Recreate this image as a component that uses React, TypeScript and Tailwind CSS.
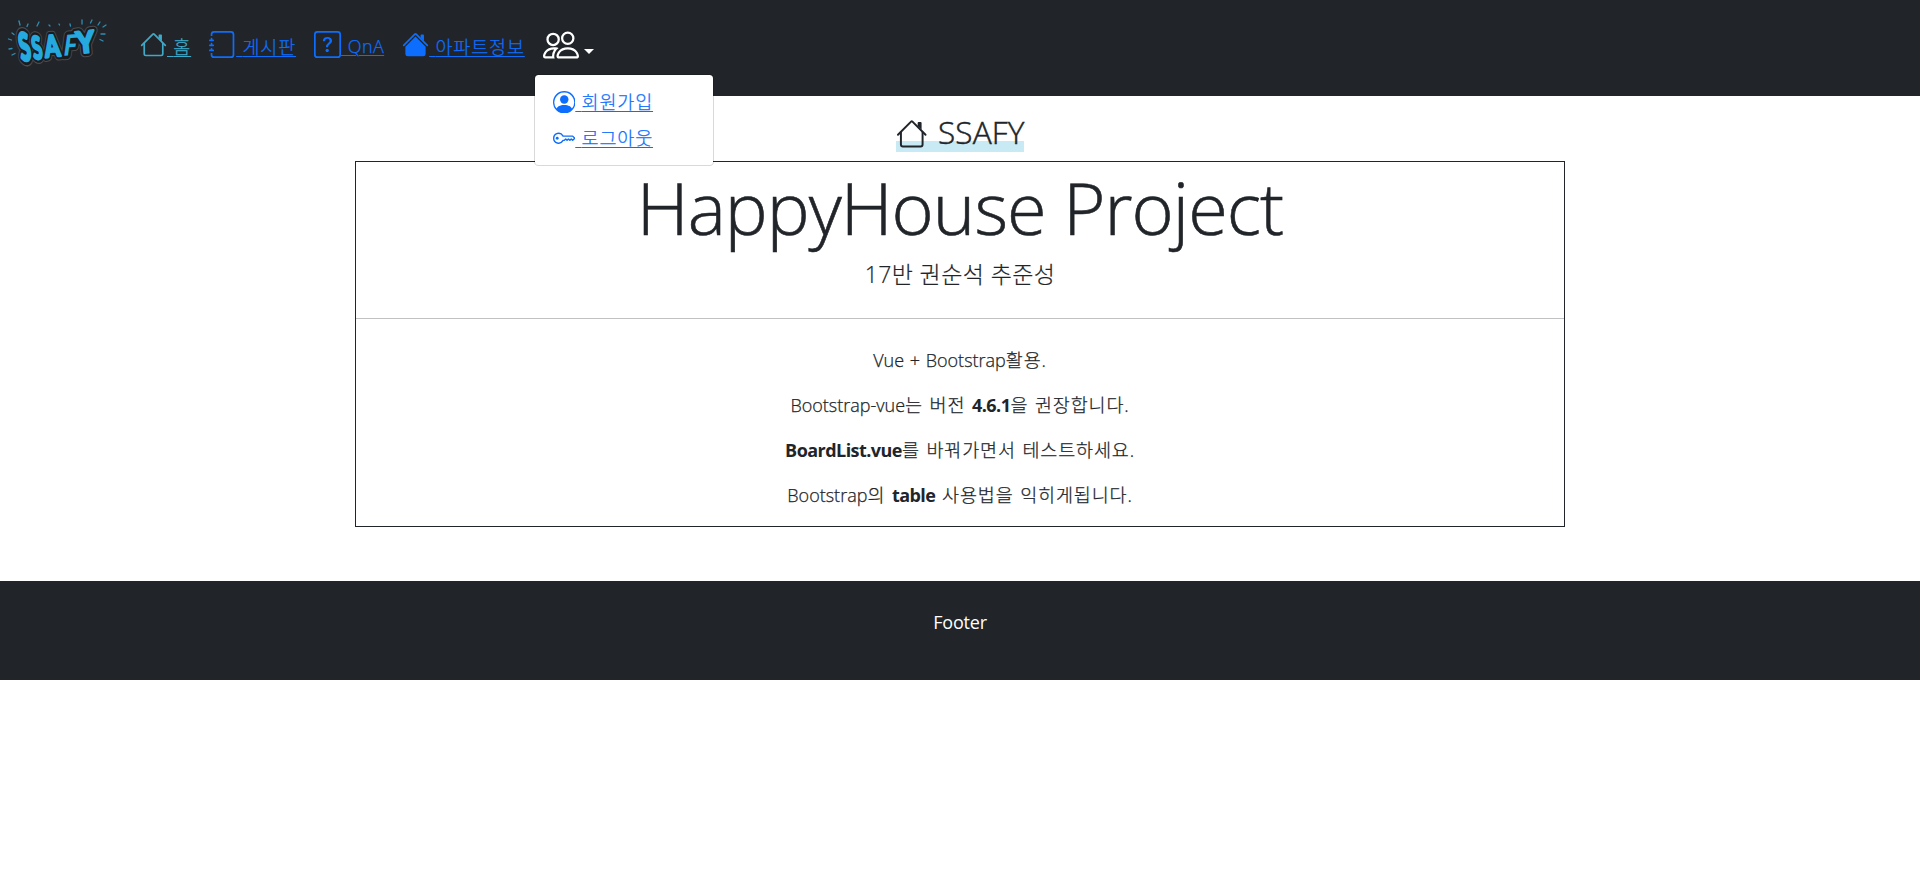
import type { ReactNode } from "react";
import { BsJournal, BsKey, BsPeople, BsPersonCircle, BsQuestionSquare } from "react-icons/bs";

const ROOF =
  "M7.293 1.5a1 1 0 0 1 1.414 0l6.647 6.646a.5.5 0 0 1-.708.708L8 2.207 1.354 8.854a.5.5 0 1 1-.708-.708L7.293 1.5z";

function House({ className }: { className: string }) {
  return (
    <svg viewBox="0 0 16 16" fill="currentColor" className={className}>
      <path
        fillRule="evenodd"
        d="M2 13.5V7h1v6.5a.5.5 0 0 0 .5.5h9a.5.5 0 0 0 .5-.5V7h1v6.5a1.5 1.5 0 0 1-1.5 1.5h-9A1.5 1.5 0 0 1 2 13.5zm11-11V6l-2-2V2.5a.5.5 0 0 1 .5-.5h1a.5.5 0 0 1 .5.5z"
      />
      <path fillRule="evenodd" d={ROOF} />
    </svg>
  );
}

function HouseFill({ className }: { className: string }) {
  return (
    <svg viewBox="0 0 16 16" fill="currentColor" className={className}>
      <path
        fillRule="evenodd"
        d="m8 3.293 6 6V13.5a1.5 1.5 0 0 1-1.5 1.5h-9A1.5 1.5 0 0 1 2 13.5V9.293l6-6zm5-.793V6l-2-2V2.5a.5.5 0 0 1 .5-.5h1a.5.5 0 0 1 .5.5z"
      />
      <path fillRule="evenodd" d={ROOF} />
    </svg>
  );
}

const letters = [
  { c: "S", t: "translate(17.5 51) rotate(-6) skewX(4) scale(0.9 1.75)" },
  { c: "S", t: "translate(30 49.5) rotate(-6) skewX(4) scale(0.8 1.45)" },
  { c: "A", t: "translate(41.5 47.5) rotate(-6) scale(1 1.35)" },
  { c: "F", t: "translate(58.5 46) rotate(-4) skewX(-12) scale(1.1 1.3)" },
  { c: "Y", t: "translate(73.5 43.5) rotate(-6) scale(1.25 1.35)" },
];

const rays = [
  "M8 23l2 1.5", "M4.500 29l3 1", "M5 39l3-.5", "M8 45l3-1.500", "M15 11l1 4", "M24 14l-1 2.500",
  "M35 12l-2 4", "M45 15l1 1", "M55 14l.5 1", "M66 14l.5 2", "M78 10v4", "M88 10l-1.500 3",
  "M96 12l-2 3", "M102 15l-3 2", "M101 24l-4 0", "M99 31l-3-1.500",
];

function Logo() {
  return (
    <svg viewBox="0 0 110 60" className="h-[60px] w-[110px] shrink-0">
      <g fontFamily="Lato, sans-serif" fontWeight="900" fontSize="22" strokeLinejoin="round">
        {letters.map((l, i) => (
          <text key={i} transform={l.t} fill="#4b4b4e" stroke="#4b4b4e" strokeWidth="6.500">{l.c}</text>
        ))}
        {letters.map((l, i) => (
          <text key={i} transform={l.t} fill="#1b1c1f" stroke="#1b1c1f" strokeWidth="5">{l.c}</text>
        ))}
        {letters.map((l, i) => (
          <text key={i} transform={l.t} fill="#25a9df" stroke="#25a9df" strokeWidth={l.c === "F" ? 0 : 1.7}>{l.c}</text>
        ))}
      </g>
      <g stroke="#2f8db5" strokeWidth="1.300" strokeLinecap="round" fill="none">
        {rays.map((d) => <path key={d} d={d} />)}
      </g>
    </svg>
  );
}

const Ko = ({ children }: { children: ReactNode }) => (
  <span className="text-[18.500px] tracking-[0.85px]">{children}</span>
);

const Label = ({ children }: { children: ReactNode }) => (
  <span className="whitespace-pre underline decoration-1 underline-offset-[2px] [word-spacing:1.6px]">{children}</span>
);

const Row = ({ children }: { children: ReactNode }) => (
  <p className="mb-[18px] h-[27px] whitespace-pre [word-spacing:1px]">{children}</p>
);

const Strong = ({ children }: { children: ReactNode }) => (
  <strong className="font-bold tracking-[-0.55px] [-webkit-text-stroke:0]">{children}</strong>
);

export default function App() {
  return (
    <div className="min-h-[885px] bg-white font-['Open_Sans','Noto_Sans_CJK_KR',sans-serif] text-[18px] font-light leading-[27px] text-[#212529]">
      <header className="flex h-24 items-start bg-[#212529] pl-1 text-[#0d6efd]">
        <div className="pt-[10px]"><Logo /></div>
        <nav className="ml-[26px] flex items-start gap-[18px] pt-[31px] [-webkit-text-stroke:0.25px]">
          <a className="flex text-[#3fa9c8]">
            <House className="size-[27px]" />
            <span className="flex pt-[2px]"><Label> <Ko>홈</Ko></Label></span>
          </a>
          <a className="flex">
            <BsJournal className="size-[27px]" strokeWidth={0} />
            <span className="flex pt-[2px]"><Label> <Ko>게시판</Ko></Label></span>
          </a>
          <a className="flex">
            <BsQuestionSquare className="size-[27px]" strokeWidth={0} />
            <span className="flex pt-[2px] tracking-[0.4px]"><Label> QnA</Label></span>
          </a>
          <a className="flex">
            <HouseFill className="size-[27px]" />
            <span className="flex pt-[2px]"><Label> <Ko>아파트정보</Ko></Label></span>
          </a>
          <div className="relative -mt-1 flex text-white">
            <BsPeople className="size-9" strokeWidth={0} />
            <span className="mt-[22px] ml-[5px] h-0 border-x-[5px] border-t-[5px] border-x-transparent border-t-white" />
            <div className="absolute top-[47px] -left-[9px] z-10 h-[92px] w-[180px] rounded-[4.500px] border border-black/15 bg-white bg-clip-padding pt-[9px] pl-[18px] text-[#0d6efd]">
              <a className="flex h-9 items-center">
                <BsPersonCircle className="size-[22.500px]" strokeWidth={0} />
                <Label> <Ko>회원가입</Ko></Label>
              </a>
              <a className="flex h-9 items-center">
                <BsKey className="size-[22.500px]" strokeWidth={0} />
                <Label> <Ko>로그아웃</Ko></Label>
              </a>
            </div>
          </div>
        </nav>
      </header>

      <main className="mx-auto w-[1210px] text-center">
        <h3 className="flex h-[65px] justify-center pt-[17px] text-[31.500px] leading-[38px]">
          <span className="flex h-[39px] items-start bg-linear-to-b from-transparent from-72% to-[#c7eaf5] to-72%">
            <House className="mt-[4.500px] size-[31.500px]" />
            <span className="ml-[11px] font-light tracking-[0.15px] [-webkit-text-stroke:0.5px]">SSAFY</span>
          </span>
        </h3>
        <section className="h-[366px] border border-[#212529]">
          <h1 className="pt-[2px] text-[72px] leading-[86px] tracking-[-0.95px] [-webkit-text-stroke:0.6px]">HappyHouse Project</h1>
          <p className="mt-[7px] h-[34px] text-[23px] leading-[34px] tracking-[0.4px] [-webkit-text-stroke:0.2px]">17반 권순석 추준성</p>
          <hr className="mt-[27px] border-[#c0c1c2]" />
          <div className="pt-[27px] [-webkit-text-stroke:0.25px]">
            <Row>Vue + Bootstrap<Ko>활용.</Ko></Row>
            <Row>Bootstrap-vue<Ko>는 버전 </Ko><Strong>4.6.1</Strong><Ko>을 권장합니다.</Ko></Row>
            <Row><Strong>BoardList.vue</Strong><Ko>를 바꿔가면서 테스트하세요.</Ko></Row>
            <Row>Bootstrap<Ko>의 </Ko><Strong>table</Strong><Ko> 사용법을 익히게됩니다.</Ko></Row>
          </div>
        </section>
      </main>

      <footer className="mt-[54px] h-[99px] bg-[#212529] pt-[28px] text-center font-normal tracking-[-0.2px] text-white">
        Footer
      </footer>
    </div>
  );
}
